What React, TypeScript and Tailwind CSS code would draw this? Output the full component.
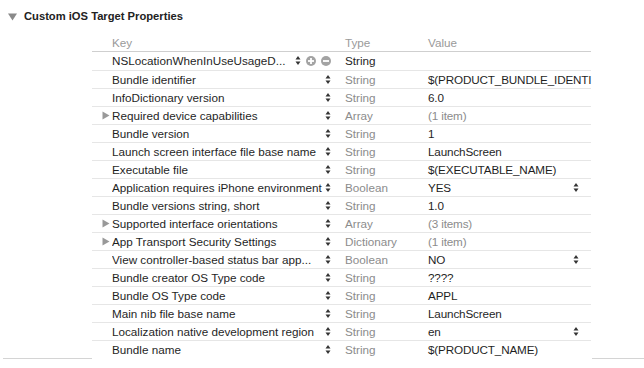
import React from "react";

interface Row {
  key: string;
  type: string;
  value: string;
  expandable?: boolean;
  popup?: boolean;
  muted?: boolean;
  editing?: boolean;
}

const rows: Row[] = [
  { key: "NSLocationWhenInUseUsageD...", type: "String", value: "", editing: true },
  { key: "Bundle identifier", type: "String", value: "$(PRODUCT_BUNDLE_IDENTI" },
  { key: "InfoDictionary version", type: "String", value: "6.0" },
  { key: "Required device capabilities", type: "Array", value: "(1 item)", expandable: true, muted: true },
  { key: "Bundle version", type: "String", value: "1" },
  { key: "Launch screen interface file base name", type: "String", value: "LaunchScreen" },
  { key: "Executable file", type: "String", value: "$(EXECUTABLE_NAME)" },
  { key: "Application requires iPhone environment", type: "Boolean", value: "YES", popup: true },
  { key: "Bundle versions string, short", type: "String", value: "1.0" },
  { key: "Supported interface orientations", type: "Array", value: "(3 items)", expandable: true, muted: true },
  { key: "App Transport Security Settings", type: "Dictionary", value: "(1 item)", expandable: true, muted: true },
  { key: "View controller-based status bar app...", type: "Boolean", value: "NO", popup: true },
  { key: "Bundle creator OS Type code", type: "String", value: "????" },
  { key: "Bundle OS Type code", type: "String", value: "APPL" },
  { key: "Main nib file base name", type: "String", value: "LaunchScreen" },
  { key: "Localization native development region", type: "String", value: "en", popup: true },
  { key: "Bundle name", type: "String", value: "$(PRODUCT_NAME)" },
];

const Stepper = () => (
  <svg width="6" height="11" viewBox="0 0 6 11" className="shrink-0">
    <path d="M3 1 L5.5 4.5 L0.5 4.5 Z" fill="#333" />
    <path d="M3 10 L5.5 6.5 L0.5 6.5 Z" fill="#333" />
  </svg>
);

const CircleButton = ({ minus }: { minus?: boolean }) => (
  <svg width="10" height="10" viewBox="0 0 10 10" className="shrink-0">
    <circle cx="5" cy="5" r="5" fill="#a3a3a3" />
    <rect x="2" y="4.1" width="6" height="1.8" fill="#fff" />
    {!minus && <rect x="4.1" y="2" width="1.8" height="6" fill="#fff" />}
  </svg>
);

const Disclosure = () => (
  <svg width="8" height="9" viewBox="0 0 8 9" className="shrink-0">
    <path d="M0.5 0.5 L7.5 4.5 L0.5 8.5 Z" fill="#999" />
  </svg>
);

export default function App() {
  return (
    <div
      className="w-[644px] h-[368px] bg-white overflow-hidden text-[11.7px] text-[#1f1f1f]"
      style={{ fontFamily: '"Liberation Sans", Arial, sans-serif' }}
    >
      {/* section title */}
      <div className="h-[34px] flex items-center pl-[8px] gap-[7px]">
        <svg width="9" height="8" viewBox="0 0 9 8">
          <path d="M0 0.5 L9 0.5 L4.5 7.5 Z" fill="#8a8a8a" />
        </svg>
        <span className="text-[11.2px] font-bold text-[#222] pb-[1px]">Custom iOS Target Properties</span>
      </div>

      {/* header */}
      <div className="ml-[92px] w-[499px] h-[18px] flex items-center border-b border-[#cfcfcf] text-[#9a9a9a]">
        <div className="w-[245px] shrink-0 pl-[20px]">Key</div>
        <div className="w-[83px] shrink-0 pl-[8px]">Type</div>
        <div className="flex-1 min-w-0 pl-[8px]">Value</div>
      </div>

      {rows.map((r, i) => (
        <div
          key={i}
          className={`ml-[92px] w-[499px] h-[18px] flex items-center ${i > 0 ? "border-t border-[#e6e6e6]" : ""}`}
        >
          <div className="w-[245px] shrink-0 flex items-center pl-[10px] pr-[6px]">
            <div className="w-[10px] shrink-0">{r.expandable && <Disclosure />}</div>
            <span className="flex-1 min-w-0 whitespace-nowrap overflow-hidden">{r.key}</span>
            {r.editing ? (
              <div className="flex items-center gap-[5px]">
                <Stepper />
                <CircleButton />
                <CircleButton minus />
              </div>
            ) : (
              <Stepper />
            )}
          </div>
          <div className={`w-[83px] shrink-0 pl-[8px] ${r.editing ? "text-[#1f1f1f]" : "text-[#8c8c8c]"}`}>{r.type}</div>
          <div className="flex-1 min-w-0 flex items-center pl-[8px]">
            <span className={`flex-1 min-w-0 whitespace-nowrap tracking-[-0.15px] ${r.muted ? "text-[#8c8c8c]" : ""}`}>
              {r.value}
            </span>
            {r.popup && (
              <div className="mr-[12px]">
                <Stepper />
              </div>
            )}
          </div>
        </div>
      ))}

      {/* section bottom separator */}
      <div className="flex items-start h-[10px]">
        <div className="ml-[3px] w-[89px] border-t border-[#d4d4d4]" />
        <div className="flex-1" />
        <div className="w-[52px] border-t border-[#d4d4d4]" />
      </div>
    </div>
  );
}
